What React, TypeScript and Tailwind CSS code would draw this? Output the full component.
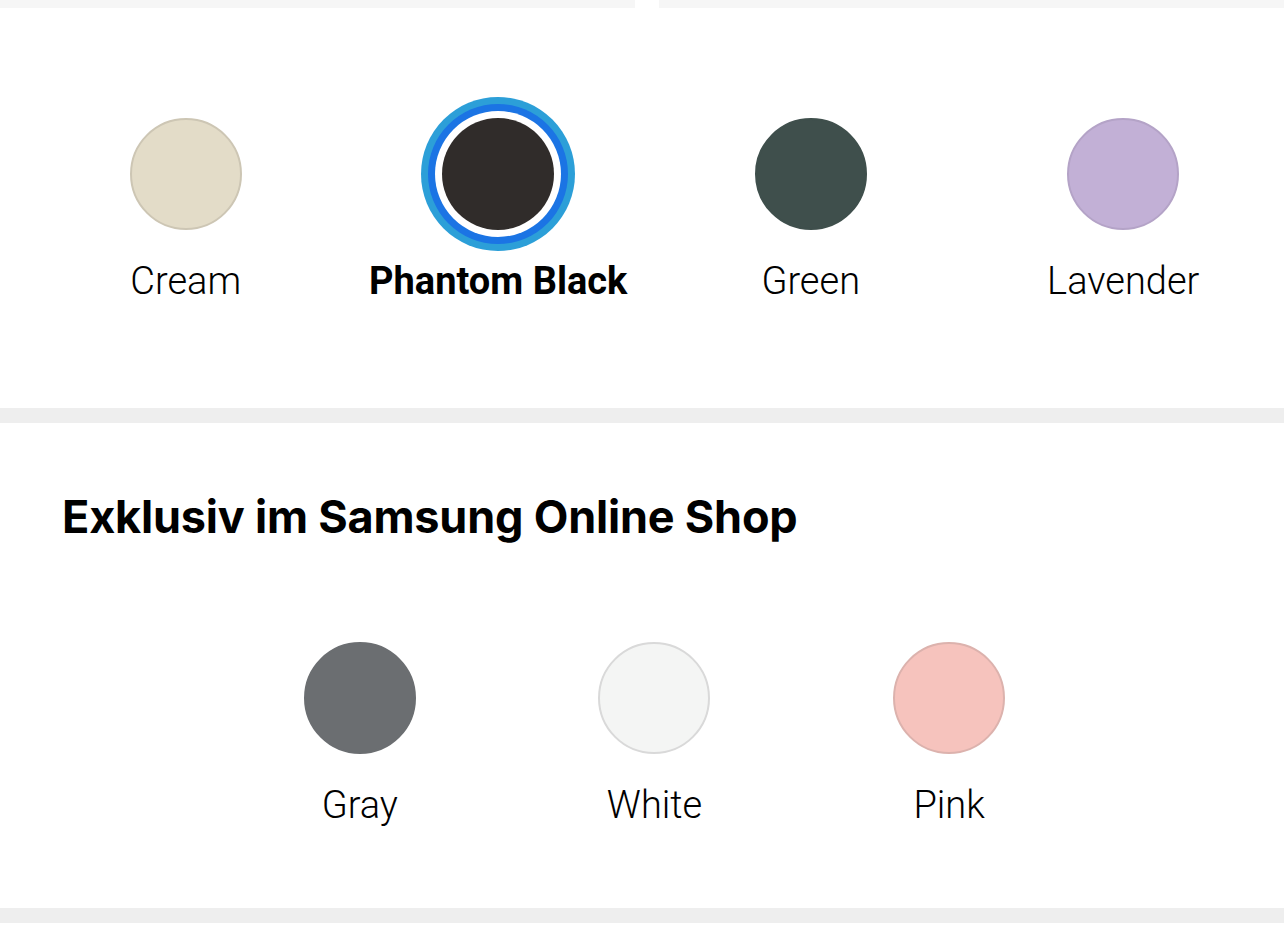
import React from "react";

type Swatch = {
  name: string;
  fill: string;
  border: string;
  selected?: boolean;
};

const mainColors: Swatch[] = [
  { name: "Cream", fill: "bg-[#e3dcc8]", border: "border-[#cdc6b4]" },
  { name: "Phantom Black", fill: "bg-[#302c2a]", border: "border-[#302c2a]", selected: true },
  { name: "Green", fill: "bg-[#3f4f4c]", border: "border-[#3f4f4c]" },
  { name: "Lavender", fill: "bg-[#c2b0d6]", border: "border-[#b4a3c7]" },
];

const exclusiveColors: Swatch[] = [
  { name: "Gray", fill: "bg-[#6b6e71]", border: "border-[#6b6e71]" },
  { name: "White", fill: "bg-[#f4f5f4]", border: "border-[#d9d9d9]" },
  { name: "Pink", fill: "bg-[#f6c3bd]", border: "border-[#dcb2ad]" },
];

function ColorChip({ swatch }: { swatch: Swatch }) {
  return (
    <div className="flex flex-col items-center">
      <div className="h-[156px] w-[156px] flex items-center justify-center">
        {swatch.selected ? (
          // selected ring: light blue, blue, white gap, colour
          <div className="h-[154px] w-[154px] rounded-full bg-[#2c9fd8] flex items-center justify-center">
            <div className="h-[140px] w-[140px] rounded-full bg-[#1b74e4] flex items-center justify-center">
              <div className="h-[126px] w-[126px] rounded-full bg-white flex items-center justify-center">
                <div className={`h-[112px] w-[112px] rounded-full ${swatch.fill}`} />
              </div>
            </div>
          </div>
        ) : (
          <div className={`h-[112px] w-[112px] rounded-full border-2 ${swatch.fill} ${swatch.border}`} />
        )}
      </div>
      <span
        className={`mt-[4px] text-[38px] leading-[50px] text-black ${swatch.selected ? "font-bold" : "font-light"}`}
        style={{ fontFamily: "Roboto, 'Noto Sans', sans-serif" }}
      >
        {swatch.name}
      </span>
    </div>
  );
}

export default function App() {
  return (
    <div className="min-h-[950px] w-full bg-white overflow-hidden">
      {/* bottom edge of the cards above */}
      <div className="flex h-[8px] gap-[24px]">
        <div className="w-[635px] bg-[#f6f6f6]" />
        <div className="flex-1 bg-[#f6f6f6]" />
      </div>

      <section className="h-[400px] pl-[25px] pt-[88px]">
        <div className="mx-auto grid w-[1250px] grid-cols-4">
          {mainColors.map((c) => (
            <ColorChip key={c.name} swatch={c} />
          ))}
        </div>
      </section>

      <div className="h-[15px] bg-[#eeeeee]" />

      <section className="h-[485px] pl-[25px]">
        <h2
          className="pl-[37px] pt-[66px] text-[45px] leading-[56px] font-bold text-black tracking-[-0.2px]"
          style={{ fontFamily: "Inter, 'Noto Sans', sans-serif" }}
        >
          Exklusiv im Samsung Online Shop
        </h2>
        <div className="mx-auto mt-[75px] grid w-[884px] grid-cols-3">
          {exclusiveColors.map((c) => (
            <ColorChip key={c.name} swatch={c} />
          ))}
        </div>
      </section>

      <div className="h-[15px] bg-[#eeeeee]" />
      <div className="h-[27px] bg-white" />
    </div>
  );
}
